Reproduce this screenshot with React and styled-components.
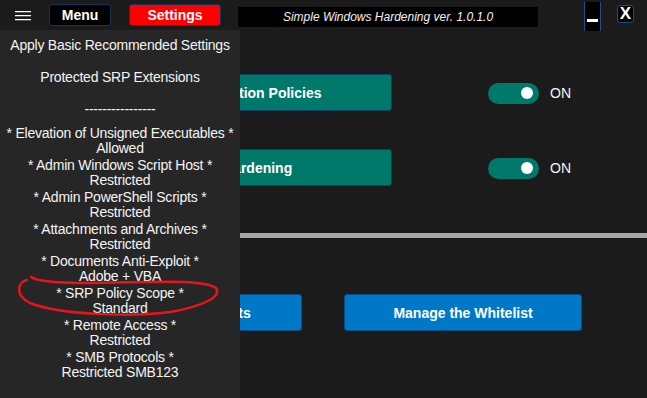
import React from "react";
import styled, { createGlobalStyle } from "styled-components";

const GlobalStyle = createGlobalStyle`
    html, body {
        margin: 0;
        padding: 0;
        background: #1b1b1b;
    }
    body {
        font-family: "Liberation Sans", Arial, sans-serif;
    }
`;

const menuItems = [
    ["Apply Basic Recommended Settings"],
    ["Protected SRP Extensions"],
    ["----------------"],
    ["* Elevation of Unsigned Executables *", "Allowed"],
    ["* Admin Windows Script Host *", "Restricted"],
    ["* Admin PowerShell Scripts *", "Restricted"],
    ["* Attachments and Archives *", "Restricted"],
    ["* Documents Anti-Exploit *", "Adobe + VBA"],
    ["* SRP Policy Scope *", "Standard"],
    ["* Remote Access *", "Restricted"],
    ["* SMB Protocols *", "Restricted SMB123"],
];

const App = () => {
    return (
        <Window>
            <GlobalStyle />
            <TopBar>
                <Burger viewBox="0 0 16 10">
                    <path d="M0 0.6H16M0 4.6H16M0 8.6H16" stroke="#fff" strokeWidth="1.3" />
                </Burger>
                <TopButton>Menu</TopButton>
                <TopButton $active>Settings</TopButton>
                <Title>Simple Windows Hardening ver. 1.0.1.0</Title>
                <Minimize><span /></Minimize>
                <Close>X</Close>
            </TopBar>

            <Content>
                <Row>
                    <TealButton>Software Restriction Policies</TealButton>
                    <Toggle><Knob /></Toggle>
                    <ToggleLabel>ON</ToggleLabel>
                </Row>
                <Row $gap={38}>
                    <TealButton>Windows Hardening</TealButton>
                    <Toggle><Knob /></Toggle>
                    <ToggleLabel>ON</ToggleLabel>
                </Row>
                <Divider />
                <ButtonRow>
                    <BlueButton>Check Audit Results</BlueButton>
                    <BlueButton>Manage the Whitelist</BlueButton>
                </ButtonRow>
            </Content>

            <Drawer>
                {menuItems.map((lines, i) => (
                    <MenuItem key={i}>
                        {lines.map((l) => <span key={l}>{l}</span>)}
                    </MenuItem>
                ))}
                {/* hand-drawn red mark around the SRP scope entry */}
                <Scribble viewBox="0 0 240 368">
                    <path
                        d="M31 247 C36 251,60 253,90 253 C140 253,200 248,216 258 C222 266,205 276,170 282 C130 287,60 285,30 273 C14 265,18 252,27 250"
                        fill="none"
                        stroke="#e8141c"
                        strokeWidth="2.5"
                        strokeLinecap="round"
                    />
                </Scribble>
            </Drawer>
        </Window>
    );
};

const Window = styled.div`
    position: relative;
    width: 647px;
    height: 398px;
    background: #1b1b1b;
    overflow: hidden;
    color: #fff;
`;

const TopBar = styled.div`
    display: flex;
    align-items: center;
    height: 30px;
    padding-left: 15px;
`;

const Burger = styled.svg`
    width: 16px;
    height: 10px;
    margin-right: 18px;
    margin-top: 1px;
`;

const TopButton = styled.div`
    display: flex;
    align-items: center;
    justify-content: center;
    box-sizing: border-box;
    height: 22px;
    width: ${(p) => (p.$active ? "92px" : "62px")};
    margin-right: 18px;
    background: ${(p) => (p.$active ? "#ff0000" : "#000")};
    border: 1px solid #12345e;
    border-radius: 3px;
    font-size: 14px;
    font-weight: bold;
`;

const Title = styled.div`
    display: flex;
    align-items: center;
    justify-content: center;
    width: 300px;
    height: 20px;
    margin-left: -1px;
    margin-top: 4px;
    background: #000;
    font-size: 12px;
    font-style: italic;
    color: #f2f2f2;
`;

const Minimize = styled.div`
    display: flex;
    justify-content: center;
    box-sizing: border-box;
    width: 17px;
    height: 29px;
    margin-left: 46px;
    margin-top: 3px;
    background: #000;
    border-left: 1px solid #1c4f8a;
    border-right: 1px solid #1c4f8a;

    span {
        width: 11px;
        height: 3px;
        margin-top: 17px;
        background: #fff;
    }
`;

const Close = styled.div`
    display: flex;
    align-items: center;
    justify-content: center;
    box-sizing: border-box;
    width: 17px;
    height: 18px;
    margin-left: 16px;
    margin-bottom: 2px;
    background: #000;
    border: 1px solid #1c4f8a;
    border-radius: 3px;
    font-size: 17px;
    font-weight: bold;
`;

const Content = styled.div`
    display: flex;
    flex-direction: column;
    padding-top: 44px;
`;

const Row = styled.div`
    display: flex;
    align-items: center;
    margin-top: ${(p) => p.$gap || 0}px;
    padding-left: 58px;
`;

const TealButton = styled.div`
    display: flex;
    align-items: center;
    justify-content: center;
    box-sizing: border-box;
    width: 334px;
    height: 37px;
    background: #00796b;
    border: 1px solid #123e6a;
    border-radius: 3px;
    font-size: 14px;
    font-weight: bold;
`;

const Toggle = styled.div`
    display: flex;
    align-items: center;
    justify-content: flex-end;
    box-sizing: border-box;
    width: 51px;
    height: 21px;
    margin-left: 96px;
    margin-top: 1px;
    padding-right: 6px;
    background: #00796b;
    border-radius: 11px;
`;

const Knob = styled.div`
    width: 12px;
    height: 12px;
    border-radius: 50%;
    background: #fff;
`;

const ToggleLabel = styled.span`
    margin-left: 11px;
    font-size: 14px;
    color: #f4f4f4;
`;

const Divider = styled.div`
    height: 5px;
    margin-top: 47px;
    background: #a9a9a9;
`;

const ButtonRow = styled.div`
    display: flex;
    gap: 42px;
    margin-top: 56px;
    padding-left: 64px;
`;

const BlueButton = styled.div`
    display: flex;
    align-items: center;
    justify-content: center;
    box-sizing: border-box;
    width: 238px;
    height: 37px;
    background: #0078c8;
    border: 1px solid #0b4a85;
    border-radius: 3px;
    font-size: 14px;
    font-weight: bold;
`;

const Drawer = styled.div`
    position: absolute;
    top: 30px;
    left: 0;
    bottom: 0;
    width: 240px;
    background: #262626;
    display: flex;
    flex-direction: column;
    color: #f4f4f4;
`;

const MenuItem = styled.div`
    display: flex;
    flex-direction: column;
    align-items: center;
    justify-content: center;
    height: 32px;
    font-size: 14px;
    letter-spacing: -0.22px;
    line-height: 15px;
    white-space: nowrap;

    &:first-child {
        margin-top: -1px;
    }
`;

const Scribble = styled.svg`
    position: absolute;
    top: 0;
    left: 0;
    width: 240px;
    height: 368px;
    pointer-events: none;
`;

export default App;
